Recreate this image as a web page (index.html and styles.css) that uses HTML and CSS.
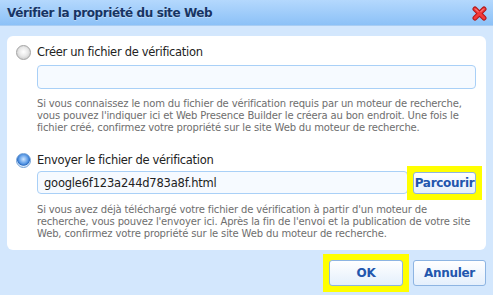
FILE: index.html
```html
<!DOCTYPE html>
<html lang="fr">
<head>
<meta charset="UTF-8">
<title>Vérifier la propriété du site Web</title>
<link rel="stylesheet" href="styles.css">
</head>
<body>
<div class="dialog">
	<div class="titlebar">
		<span class="title">Vérifier la propriété du site Web</span>
		<a href="javascript:;" class="close">
			<svg width="15" height="15" viewBox="0 0 15 15">
				<path d="M3 3 L12 12 M12 3 L3 12" stroke="#b01818" stroke-width="5" stroke-linecap="round"/>
				<path d="M3 3 L12 12 M12 3 L3 12" stroke="#f23a3a" stroke-width="3" stroke-linecap="round"/>
				<path d="M3.5 3 L6 5.5 M11.5 3 L9 5.5" stroke="#ff9a9a" stroke-width="1" stroke-linecap="round"/>
			</svg>
		</a>
	</div>
	<div class="content">
		<div class="panel">
			<label class="option">
				<span class="radio"></span>
				<span>Créer un fichier de vérification</span>
			</label>
			<div class="field">
				<input type="text" class="text-input">
			</div>
			<p class="hint">Si vous connaissez le nom du fichier de vérification requis par un moteur de recherche,<br>vous pouvez l'indiquer ici et Web Presence Builder le créera au bon endroit. Une fois le<br>fichier créé, confirmez votre propriété sur le site Web du moteur de recherche.</p>

			<label class="option option-second">
				<span class="radio checked"></span>
				<span>Envoyer le fichier de vérification</span>
			</label>
			<div class="field field-upload">
				<input type="text" class="text-input" value="google6f123a244d783a8f.html">
				<span class="highlight"><a href="javascript:;" class="btn btn-browse">Parcourir</a></span>
			</div>
			<p class="hint hint-upload">Si vous avez déjà téléchargé votre fichier de vérification à partir d'un moteur de<br>recherche, vous pouvez l'envoyer ici. Après la fin de l'envoi et la publication de votre site<br>Web, confirmez votre propriété sur le site Web du moteur de recherche.</p>
		</div>
		<div class="actions">
			<span class="highlight"><a href="javascript:;" class="btn btn-ok">OK</a></span>
			<a href="javascript:;" class="btn btn-cancel">Annuler</a>
		</div>
	</div>
</div>
</body>
</html>
```
FILE: styles.css
```css
body {
	margin: 0;
	font-family: "DejaVu Sans", sans-serif;
}

a {
	text-decoration: none;
}

.dialog {
	width: 493px;
	height: 295px;
	background: #d3e7fd;
	overflow: hidden;
}

.titlebar {
	height: 25px;
	display: flex;
	justify-content: space-between;
	align-items: center;
	padding: 0 6px 0 7px;
	background: linear-gradient(#b4d8fd, #8cc1f7);
	border-bottom: 1px solid #a9cdf3;
}

.title {
	font-size: 12px;
	font-weight: bold;
	color: #173463;
	letter-spacing: -0.4px;
	text-shadow: 0 1px 0 rgba(255, 255, 255, 0.35);
}

.close {
	display: flex;
	margin-top: 1px;
}

.content {
	padding: 10px 7px 0;
}

.panel {
	background: #fff;
	border-radius: 6px;
	padding: 8px 10px 10px 9px;
}

.option {
	display: flex;
	align-items: center;
	gap: 6px;
	height: 16px;
	font-size: 11.5px;
	color: #222;
	letter-spacing: -0.3px;
}

.option-second {
	margin-top: 18px;
}

.radio {
	width: 13px;
	height: 13px;
	border-radius: 50%;
	border: 1px solid #a4a4a4;
	background: radial-gradient(circle at 50% 45%, #ffffff 0, #e9e9e9 45%, #cfcfcf 75%, #f4f4f4 100%);
}

.radio.checked {
	border-color: #6f9fd6;
	background: radial-gradient(circle at 50% 40%, #cfe6ff 0, #5a9ae6 45%, #2f6fc4 60%, #d8e9fb 68%, #ffffff 100%);
}

.field {
	display: flex;
	align-items: center;
	margin: 5px 0 0 21px;
}

.text-input {
	flex: 1;
	height: 24px;
	box-sizing: border-box;
	border: 1px solid #a9d0f7;
	border-radius: 4px;
	background: #f6faff;
	padding: 0 6px;
	font: 11.5px "DejaVu Sans", sans-serif;
	letter-spacing: -0.2px;
	color: #222;
	outline: none;
}

.field-upload {
	margin-top: 3px;
	gap: 5px;
}

.field-upload .text-input {
	height: 23px;
}

.hint {
	margin: 9px 0 0 21px;
	font-size: 10px;
	line-height: 12px;
	color: #6e6e6e;
	letter-spacing: -0.15px;
	white-space: nowrap;
}

.hint-upload {
	margin-top: 10px;
}

.highlight {
	display: flex;
	background: #ffff00;
	padding: 6px;
	margin: -6px;
}

.btn {
	display: flex;
	justify-content: center;
	align-items: center;
	box-sizing: border-box;
	border: 1px solid #8db4e2;
	border-radius: 3px;
	background: linear-gradient(#ffffff, #e4effc);
	color: #2256ad;
	font-size: 12px;
	font-weight: bold;
	letter-spacing: -0.3px;
}

.btn-browse {
	width: 63px;
	height: 22px;
}

.actions {
	display: flex;
	justify-content: flex-end;
	gap: 10px;
	margin-top: 10px;
}

.btn-ok {
	width: 74px;
	height: 26px;
}

.btn-cancel {
	width: 73px;
	height: 26px;
}
```
